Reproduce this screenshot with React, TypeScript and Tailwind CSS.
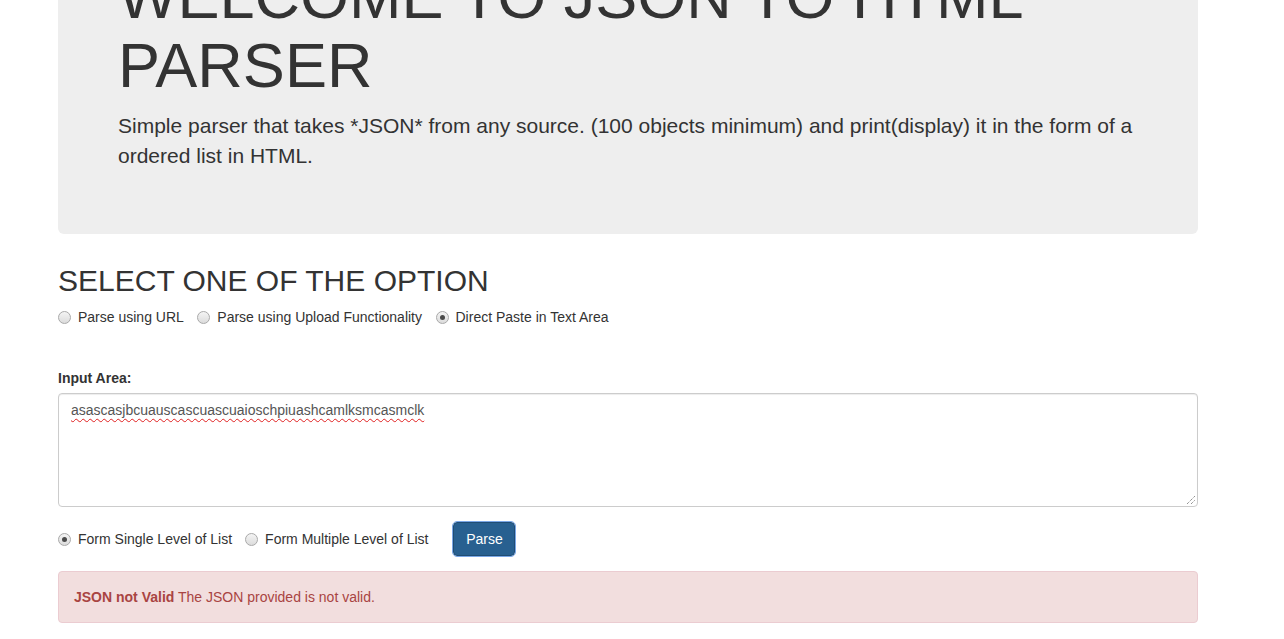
import React from "react";

function Radio({ checked }: { checked?: boolean }) {
  return (
    <span className="mt-[2px] flex h-[13px] w-[13px] shrink-0 items-center justify-center rounded-full border border-[#a9a9a9] bg-gradient-to-b from-[#f4f4f4] to-[#dcdcdc]">
      {checked ? <span className="h-[5px] w-[5px] rounded-full bg-[#4a4a4a]" /> : null}
    </span>
  );
}

function RadioLabel({ checked, children }: { checked?: boolean; children: React.ReactNode }) {
  return (
    <label className="flex h-5 items-center">
      <Radio checked={checked} />
      <span className="ml-[7px]">{children}</span>
    </label>
  );
}

export default function App() {
  return (
    <div
      className="h-[639px] overflow-hidden bg-white text-[14px] leading-[20px] text-[#333]"
      style={{ fontFamily: '"Liberation Sans", Arial, Helvetica, sans-serif' }}
    >
      <div className="ml-[58px] w-[1140px]">
        <div className="-mt-[106px] rounded-md bg-[#eeeeee] px-[60px] pb-12 pt-[68px]">
          <h1 className="mb-[10px] text-[63px] font-normal leading-[1.1]">
            WELCOME TO JSON TO HTML PARSER
          </h1>
          <p className="mb-[15px] text-[21px] leading-[30px]">
            Simple parser that takes *JSON* from any source. (100 objects minimum) and print(display) it in the form of a ordered list in HTML.
          </p>
        </div>

        <h2 className="mb-[10px] mt-[30px] text-[30px] font-normal leading-[33px]">
          SELECT ONE OF THE OPTION
        </h2>

        <div className="mt-[3px] flex items-center gap-[13.5px]">
          <RadioLabel>Parse using URL</RadioLabel>
          <RadioLabel>Parse using Upload Functionality</RadioLabel>
          <RadioLabel checked>Direct Paste in Text Area</RadioLabel>
        </div>

        <div className="mt-[41px] font-bold">Input Area:</div>
        <div className="relative mt-[5px] h-[114px] rounded border border-[#cccccc] bg-white px-3 py-[6px] shadow-[inset_0_1px_1px_rgba(0,0,0,0.075)]">
          <span className="text-[#555] underline decoration-[#e02020] decoration-wavy decoration-1 underline-offset-[3px]">
            asascasjbcuauscascuascuaioschpiuashcamlksmcasmclk
          </span>
          <svg className="absolute bottom-[1px] right-[1px]" width="10" height="10" viewBox="0 0 10 10">
            <line x1="1" y1="9" x2="9" y2="1" stroke="#666" strokeWidth="1" strokeDasharray="1 1" />
            <line x1="5" y1="9" x2="9" y2="5" stroke="#666" strokeWidth="1" strokeDasharray="1 1" />
          </svg>
        </div>

        <div className="mt-[15px] flex items-center">
          <div className="flex items-center gap-[13px]">
            <RadioLabel checked>Form Single Level of List</RadioLabel>
            <RadioLabel>Form Multiple Level of List</RadioLabel>
          </div>
          <button className="ml-[25px] h-[34px] w-[62px] rounded border border-[#204d74] bg-[#286090] text-[14px] text-white outline outline-1 outline-[#7aa7e6]">
            Parse
          </button>
        </div>

        <div className="mt-[15px] rounded border border-[#ebccd1] bg-[#f2dede] p-[15px] text-[#a94442]">
          <strong>JSON not Valid</strong> The JSON provided is not valid.
        </div>
      </div>
    </div>
  );
}
